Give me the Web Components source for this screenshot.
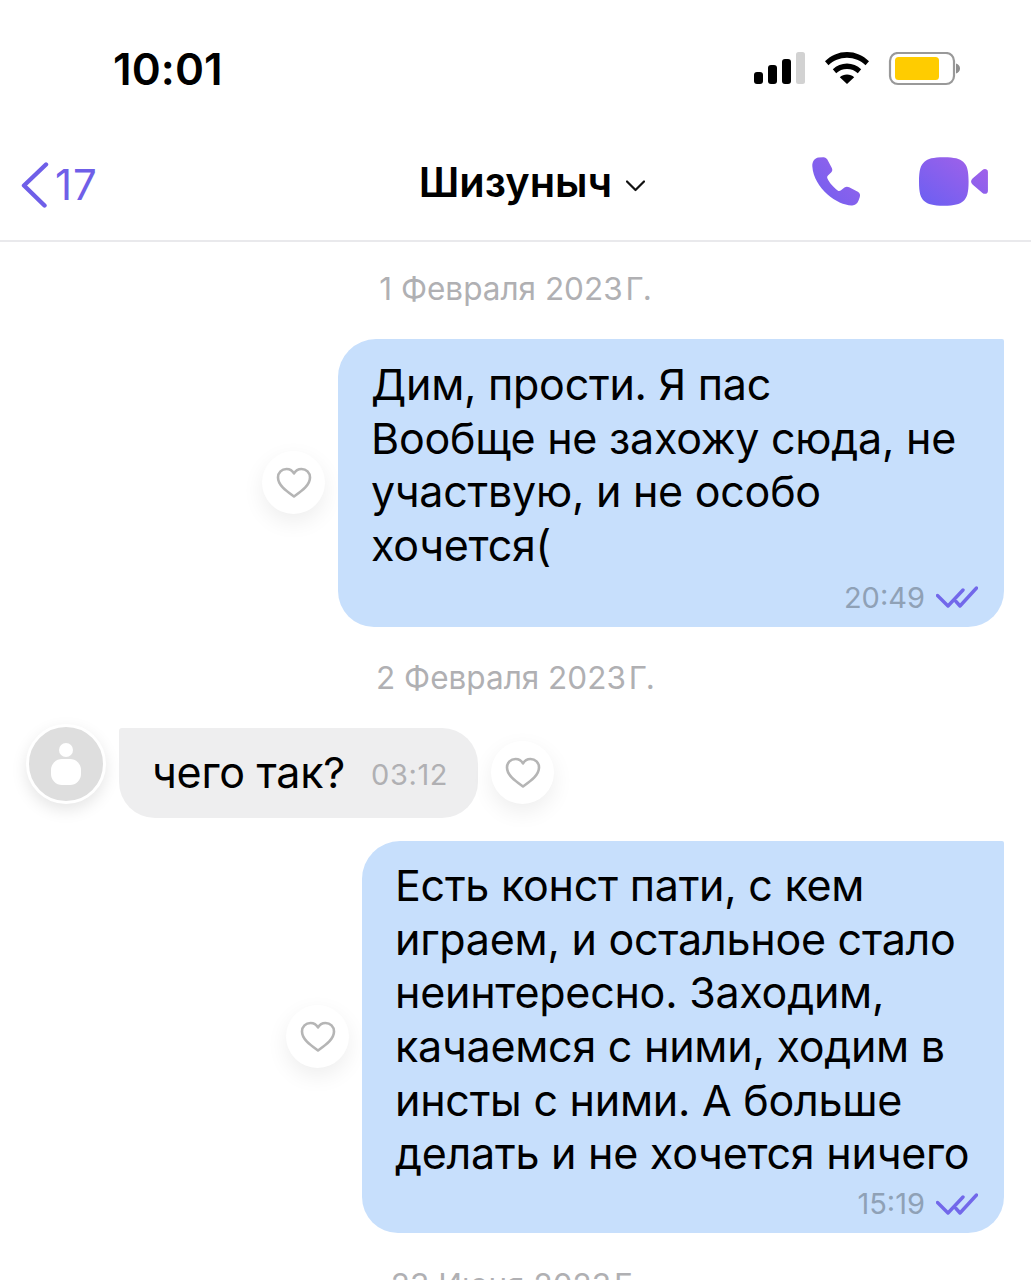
<!DOCTYPE html>
<html lang="ru"><head><meta charset="utf-8"><title>Чат</title>
<style>
html,body{margin:0;padding:0;background:#fff}
body{width:1031px;height:1280px;overflow:hidden;font-family:Inter,"Liberation Sans",sans-serif;color:#000}
</style></head><body>
<chat-screen>
  <status-bar time="10:01"></status-bar>
  <chat-nav count="17" title="Шизуныч"></chat-nav>
  <date-sep style="--above:32px;--below:35px">1 Февраля 2023&#8202;Г.</date-sep>
  <out-row w="666" time="20:49" style="--pt:19px;--mt:7px;--pb:11px">Дим, прости. Я пас<br>Вообще не захожу сюда, не<br>участвую, и не особо<br>хочется(</out-row>
  <date-sep style="--above:36px;--below:35px">2 Февраля 2023&#8202;Г.</date-sep>
  <in-row time="03:12">чего так?</in-row>
  <out-row w="642" time="15:19" style="margin-top:23px;--pt:18px;--mt:5px;--pb:11px">Есть конст пати, с кем<br>играем, и остальное стало<br>неинтересно. Заходим,<br>качаемся с ними, ходим в<br>инсты с ними. А больше<br>делать и не хочется ничего</out-row>
  <date-sep style="--above:37px;--below:0px">23 Июня 2023&#8202;Г.</date-sep>
</chat-screen>
<script>
const define=(name,html)=>customElements.define(name,class extends HTMLElement{
  constructor(){super();this.attachShadow({mode:'open'});}
  connectedCallback(){this.shadowRoot.innerHTML=html(this);}
});
define('chat-screen',()=>`<style>:host{display:flex;flex-direction:column;width:1031px;height:1280px;overflow:hidden}</style><slot></slot>`);

define('status-bar',e=>`<style>
:host{display:flex;flex:none;height:136px;box-sizing:border-box;padding:0 69px 0 113px;align-items:flex-start;justify-content:space-between}
.t{font:600 44px/1 Inter,sans-serif;letter-spacing:.1px;margin-top:47px}
.i{display:flex;margin-top:52px}
svg{display:block}
</style><div class="t">${e.getAttribute('time')}</div>
<div class="i"><svg width="208" height="34" viewBox="0 0 208 34">
<rect x="0" y="20" width="9" height="12" rx="3"/><rect x="14" y="13" width="9" height="19" rx="3"/><rect x="28" y="7" width="9" height="25" rx="3"/><rect x="42" y="0" width="9" height="32" rx="2.5" fill="#d2d2d2"/>
<g transform="translate(71,0)"><path d="M22 0C13.5 0 6 3.400 0 9.200l3.500 4C8.300 8.500 14.800 5.700 22 5.700s13.700 2.800 18.500 7.500l3.500-4C38 3.400 30.500 0 22 0z"/><path d="M22 11.500c-5.400 0-10.300 2.200-14.200 5.800l3.400 3.900c2.900-2.600 6.600-4.200 10.800-4.200s7.900 1.600 10.800 4.200l3.400-3.900C32.300 13.700 27.400 11.500 22 11.500z"/><path d="M22 22.600c-2.800 0-5.300 1-7.200 2.700L22 32l7.200-6.700C27.300 23.600 24.800 22.600 22 22.600z"/></g>
<rect x="136" y="1" width="64" height="31" rx="8" fill="#fff" stroke="#999" stroke-width="2.200"/>
<rect x="141" y="5" width="44" height="23" rx="3.500" fill="#ffcc00"/>
<path d="M202 11.500c2.600.8 4 2.600 4 5s-1.400 4.200-4 5z" fill="#8e8e8e"/>
</svg></div>`);

define('chat-nav',e=>`<style>
:host{display:flex;flex:none;height:106px;box-sizing:border-box;border-bottom:2px solid #e9e9ec;align-items:flex-start;justify-content:space-between;padding:0 43px 0 21px}
.b{display:flex;align-items:center;color:#6f5fe8;font:400 42px/1 Inter,sans-serif;letter-spacing:1px;margin-top:26px;gap:6px;width:231px}
.c{display:flex;align-items:center;gap:14px;margin-top:24px}
.c svg{margin-top:7px}
.n{font:600 41.500px/44px Inter,sans-serif}
.a{display:flex;gap:57px;margin-top:21px;justify-content:flex-end;width:176px}
svg{display:block}
</style>
<div class="b"><svg width="28" height="46" viewBox="0 0 28 46"><path d="M25 2.500 3 23.500 23.500 43.500" fill="none" stroke="#6f5fe8" stroke-width="4.400" stroke-linecap="round" stroke-linejoin="round"/></svg><span>${e.getAttribute('count')}</span></div>
<div class="c"><span class="n">${e.getAttribute('title')}</span><svg width="19" height="12" viewBox="0 0 19 12"><path d="M1 1.500 9.500 10 18 1.500" fill="none" stroke="#111" stroke-width="2.200" stroke-linecap="round" stroke-linejoin="round"/></svg></div>
<div class="a"><svg width="50" height="49" viewBox="0 0 47.500 48" preserveAspectRatio="none"><defs><linearGradient id="p" x1="0" y1="1" x2="1" y2="0"><stop offset="0" stop-color="#6f5ff0"/><stop offset="1" stop-color="#9b62ea"/></linearGradient></defs><path d="M6.300.6 10.600.2c1.800-.2 3.300.7 4.100 2.300l4.300 8.200c.8 1.600.5 3.300-.7 4.500l-3 3c-.8.800-1 1.700-.5 2.800 1.600 3.700 5.800 8.800 9.800 11.700 1 .7 2 .6 2.900 0l3.600-2.800c1.400-1.100 3-1.100 4.500-.3l8.300 4.500c1.900 1 2.600 3 1.900 5l-1.200 3.500c-1 2.900-3.300 4.900-6.400 4.800C25.300 47.800 1.800 31.400.3 9.100.1 4.800 2.500 1 6.300.6z" fill="url(#p)"/></svg>
<svg width="70" height="49" viewBox="0 0 70 49"><defs><linearGradient id="v" x1="0" y1="1" x2="1" y2="0"><stop offset="0" stop-color="#6a5ff2"/><stop offset="1" stop-color="#a761e8"/></linearGradient></defs><path d="M25 0C36 0 41 1.500 44.500 4.500 48.500 8 50 13 50 24.500S48.500 41 44.500 44.500C41 47.500 36 49 25 49S9 47.500 5.500 44.500C1.500 41 0 36 0 24.500S1.500 8 5.500 4.500C9 1.500 14 0 25 0zM54 21.500 64 12.800c2-1.700 5.500-1 5.500 2V34c0 3-3.500 3.700-5.500 2L54 27.500c-2-2-2-4 0-6z" fill="url(#v)"/></svg></div>`);

define('date-sep',()=>`<style>
:host{display:block;flex:none;text-align:center;font:400 31.500px/30px Inter,sans-serif;color:#b0b0b3;padding:var(--above) 0 var(--below)}
</style><slot></slot>`);

const heart=`<svg width="36" height="32" viewBox="0 0 36 32"><path d="M18 29.500C11 24.500 2 18.500 2 10.500 2 5.500 5.800 2 10.500 2 13.800 2 16.500 3.700 18 6.500 19.500 3.700 22.200 2 25.500 2 30.200 2 34 5.500 34 10.500c0 8-9 14-16 19z" fill="none" stroke="#b5b5b5" stroke-width="2.600" stroke-linejoin="round"/></svg>`;
define('like-btn',()=>`<style>
:host{display:flex;flex:none;width:63px;height:63px;border-radius:50%;background:#fff;align-items:center;justify-content:center;box-shadow:0 8px 22px rgba(0,0,0,.07)}
svg{display:block}
</style>${heart}`);

define('out-row',e=>`<style>
:host{display:flex;flex:none;justify-content:flex-end;align-items:center;gap:13px;padding-right:27px}
.b{width:${e.getAttribute('w')}px;box-sizing:border-box;background:#c7dffc;border-radius:38px 2px 36px 36px;padding:var(--pt) 26px var(--pb) 33px;font:400 43px/53.700px Inter,sans-serif;letter-spacing:-.25px}
.m{display:flex;justify-content:flex-end;align-items:center;gap:11px;height:36px;margin-top:var(--mt);font:400 29px/36px Inter,sans-serif;color:#8fa1b6;letter-spacing:0}
svg{display:block}
</style><like-btn></like-btn><div class="b"><slot></slot><div class="m"><span>${e.getAttribute('time')}</span><svg width="42" height="23" viewBox="0 0 42 23"><path d="M1.500 9.500 12 20 27 4M20 15.500 24 20 40.500 2" fill="none" stroke="#7268ea" stroke-width="3.400" stroke-linecap="round" stroke-linejoin="round"/></svg></div></div>`);

define('in-row',e=>`<style>
:host{display:flex;flex:none;align-items:center;padding-left:26px;gap:13px}
.av{flex:none;width:80px;height:80px;box-sizing:border-box;border-radius:50%;background:#dedede;border:3px solid #fff;box-shadow:0 6px 16px rgba(0,0,0,.1);align-self:flex-start;margin-top:-4px;display:flex;align-items:center;justify-content:center}
.b{display:flex;align-items:center;box-sizing:border-box;height:90px;width:359px;background:#eeeeef;border-radius:3px 36px 36px 36px;padding:0 0 0 33px;font:400 43px/53.700px Inter,sans-serif;letter-spacing:-.25px;gap:26px}
.t{font:400 29px/36px Inter,sans-serif;color:#b0b0b3;letter-spacing:.6px;margin-top:4px}
svg{display:block}
</style><div class="av"><svg width="32" height="42" viewBox="0 0 32 42"><circle cx="16" cy="7" r="7" fill="#fff"/><rect x="1" y="16" width="30" height="26" rx="11" fill="#fff"/></svg></div>
<div class="b"><span><slot></slot></span><span class="t">${e.getAttribute('time')}</span></div><like-btn></like-btn>`);
</script>
</body></html>
